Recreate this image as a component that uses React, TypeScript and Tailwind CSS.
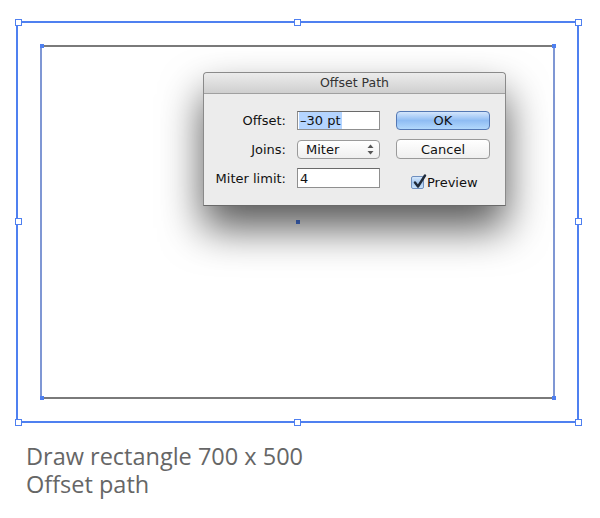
const handleBox = "absolute w-[7px] h-[7px] border border-[#4f80f0] bg-white";
const anchor = "absolute w-[4px] h-[4px] bg-[#4f80f0]";

function UpDownArrows() {
  return (
    <svg width="7" height="11" viewBox="0 0 7 11" aria-hidden>
      <path d="M3.5 0.5 L6.5 4 L0.5 4 Z" fill="#555" />
      <path d="M3.5 10.5 L6.5 7 L0.5 7 Z" fill="#555" />
    </svg>
  );
}

function Checkbox() {
  return (
    <span className="relative flex h-[13px] w-[13px] items-center justify-center rounded-[2px] border border-[#6f8fbf] bg-gradient-to-b from-[#d6e8fb] via-[#a6c8f0] to-[#c8e2fb]">
      <svg className="absolute -top-[3px] left-[1px]" width="14" height="15" viewBox="0 0 14 15" aria-hidden>
        <path d="M2 8.5 L5 12.5 L12 1.5" fill="none" stroke="#1f2a3a" strokeWidth="2.4" strokeLinecap="round" strokeLinejoin="round" />
      </svg>
    </span>
  );
}

/** Caixa "Offset Path" no estilo Aqua. */
function OffsetPathDialog() {
  return (
    <div className="absolute left-[203px] top-[72px] w-[303px] h-[134px] rounded-t-[4px] border border-[#8a8a8a] border-b-[#6a6a6a] bg-[#ececec] shadow-[0_22px_42px_rgba(0,0,0,0.66)] font-['DejaVu_Sans',sans-serif] text-[13px] text-[#111]">
      <div className="flex h-[21px] items-center justify-center rounded-t-[4px] border-b border-[#a0a0a0] bg-gradient-to-b from-[#ececec] to-[#cfcfcf] text-[12.5px] text-[#333]">
        Offset Path
      </div>
      <div className="grid grid-cols-[93px_99px_94px] grid-rows-[20px_20px_20px] gap-y-[9px] pt-[16px]">
        <span className="self-center pr-[11px] text-right leading-none">Offset:</span>
        <div className="flex h-[19px] w-[83px] items-center self-center border border-[#8f8f8f] border-t-[#6a6a6a] bg-white pl-[1px]">
          <span className="flex h-full items-center bg-[#b5d5ff] px-[1px] leading-none">–30 pt</span>
        </div>
        <button className="h-[19px] self-center rounded-[4px] border border-[#5478b4] bg-gradient-to-b from-[#d4e6fc] via-[#8fbcf3] to-[#b2d8fc] leading-none text-[#111]">
          OK
        </button>

        <span className="self-center pr-[11px] text-right leading-none">Joins:</span>
        <div className="flex h-[19px] w-[83px] items-center justify-between self-center rounded-[4px] border border-[#9a9a9a] bg-gradient-to-b from-white to-[#efefef] pl-[8px] pr-[5px] leading-none">
          <span>Miter</span>
          <UpDownArrows />
        </div>
        <button className="h-[20px] self-center rounded-[4px] border border-[#9a9a9a] bg-gradient-to-b from-white to-[#efefef] leading-none text-[#111]">
          Cancel
        </button>

        <span className="self-center pr-[11px] text-right leading-none">Miter limit:</span>
        <div className="flex h-[20px] w-[83px] items-center self-center border border-[#8f8f8f] border-t-[#6a6a6a] bg-white pl-[2px] leading-none">
          4
        </div>
        <label className="mt-[8px] flex items-center gap-[3px] self-center pl-[15px] leading-none">
          <Checkbox />
          <span>Preview</span>
        </label>
      </div>
    </div>
  );
}

export default function App() {
  return (
    <div className="relative h-[518px] w-[600px] overflow-hidden bg-white">
      <div className="pl-[16px] pt-[21px]">
        <div className="h-[402px] w-[563px] border-2 border-[#4f80f0] p-[22px]">
          <div className="h-full border-2 border-y-[#7a7a7a] border-x-[#7f97d4]" />
        </div>
      </div>

      {/* alças da seleção externa */}
      <span className={handleBox + " left-[15px] top-[19px]"} />
      <span className={handleBox + " left-[294px] top-[19px]"} />
      <span className={handleBox + " left-[575px] top-[19px]"} />
      <span className={handleBox + " left-[15px] top-[218px]"} />
      <span className={handleBox + " left-[575px] top-[218px]"} />
      <span className={handleBox + " left-[15px] top-[419px]"} />
      <span className={handleBox + " left-[294px] top-[419px]"} />
      <span className={handleBox + " left-[575px] top-[419px]"} />

      {/* pontos do retângulo interno */}
      <span className={anchor + " left-[40px] top-[44px]"} />
      <span className={anchor + " left-[552px] top-[44px]"} />
      <span className={anchor + " left-[40px] top-[396px]"} />
      <span className={anchor + " left-[552px] top-[396px]"} />
      <span className={anchor + " left-[296px] top-[220px]"} />

      <OffsetPathDialog />

      <div className="pl-[26px] pt-[19px] font-['Open_Sans',sans-serif] text-[23.5px] leading-[28px] text-[#666]">
        <p>Draw rectangle 700 x 500</p>
        <p>Offset path</p>
      </div>
    </div>
  );
}
